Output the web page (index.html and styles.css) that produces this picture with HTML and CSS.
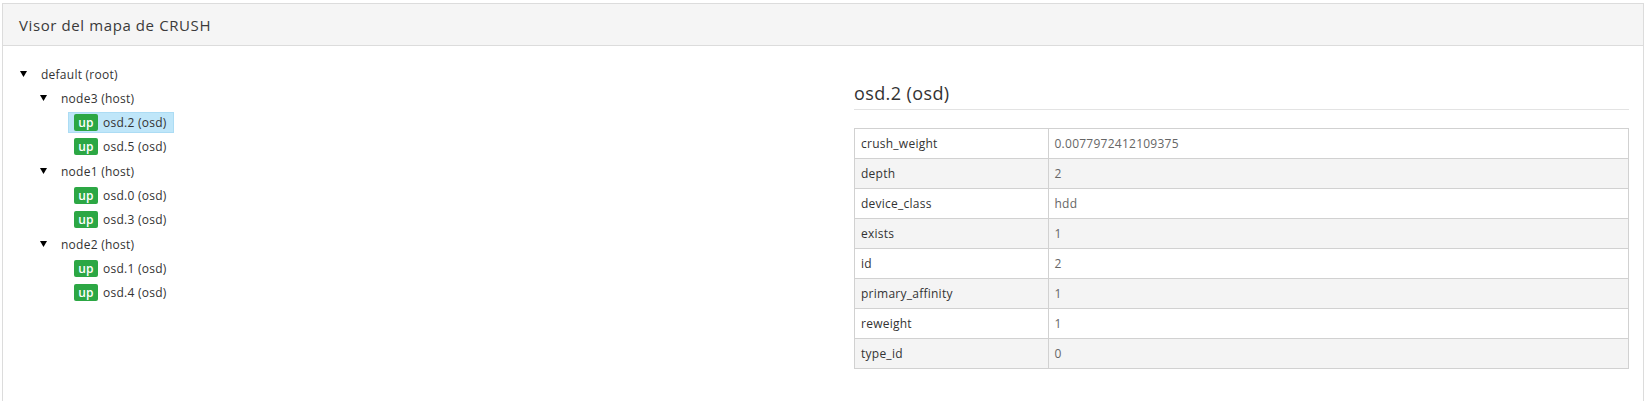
FILE: index.html
```html
<!DOCTYPE html>
<html lang="es">
<head>
<meta charset="utf-8">
<title>Visor del mapa de CRUSH</title>
<link rel="stylesheet" href="styles.css">
</head>
<body>
<div class="card">
  <div class="card-header">Visor del mapa de CRUSH</div>
  <div class="card-body">
    <div class="tree">
      <div class="node">
        <div class="row"><svg class="caret" width="7" height="6" viewBox="0 0 7 6"><polygon points="0,0 7,0 3.5,6" fill="#000"/></svg><span class="label">default (root)</span></div>
        <div class="children">
          <div class="node">
            <div class="row"><svg class="caret" width="7" height="6" viewBox="0 0 7 6"><polygon points="0,0 7,0 3.5,6" fill="#000"/></svg><span class="label">node3 (host)</span></div>
            <div class="leaves">
              <div class="leaf"><span class="leaf-box active"><span class="badge">up</span><span class="label">osd.2 (osd)</span></span></div>
              <div class="leaf"><span class="leaf-box"><span class="badge">up</span><span class="label">osd.5 (osd)</span></span></div>
            </div>
          </div>
          <div class="node">
            <div class="row"><svg class="caret" width="7" height="6" viewBox="0 0 7 6"><polygon points="0,0 7,0 3.5,6" fill="#000"/></svg><span class="label">node1 (host)</span></div>
            <div class="leaves">
              <div class="leaf"><span class="leaf-box"><span class="badge">up</span><span class="label">osd.0 (osd)</span></span></div>
              <div class="leaf"><span class="leaf-box"><span class="badge">up</span><span class="label">osd.3 (osd)</span></span></div>
            </div>
          </div>
          <div class="node">
            <div class="row"><svg class="caret" width="7" height="6" viewBox="0 0 7 6"><polygon points="0,0 7,0 3.5,6" fill="#000"/></svg><span class="label">node2 (host)</span></div>
            <div class="leaves">
              <div class="leaf"><span class="leaf-box"><span class="badge">up</span><span class="label">osd.1 (osd)</span></span></div>
              <div class="leaf"><span class="leaf-box"><span class="badge">up</span><span class="label">osd.4 (osd)</span></span></div>
            </div>
          </div>
        </div>
      </div>
    </div>
    <div class="details">
      <h3 class="details-title">osd.2 (osd)</h3>
      <table class="props">
        <tr><td class="key">crush_weight</td><td class="val">0.0077972412109375</td></tr>
        <tr><td class="key">depth</td><td class="val">2</td></tr>
        <tr><td class="key">device_class</td><td class="val">hdd</td></tr>
        <tr><td class="key">exists</td><td class="val">1</td></tr>
        <tr><td class="key">id</td><td class="val">2</td></tr>
        <tr><td class="key">primary_affinity</td><td class="val">1</td></tr>
        <tr><td class="key">reweight</td><td class="val">1</td></tr>
        <tr><td class="key">type_id</td><td class="val">0</td></tr>
      </table>
    </div>
  </div>
</div>
</body>
</html>
```
FILE: styles.css
```css
html, body {
  margin: 0;
  padding: 0;
  overflow: hidden;
  background: #fff;
}
body {
  font-family: "Open Sans", "Liberation Sans", sans-serif;
  font-size: 12px;
  letter-spacing: 0.25px;
  color: #333;
  padding: 3px 6px 0 2px;
}
.card {
  border: 1px solid #dcdcdc;
  min-height: 420px;
}
.card-header {
  background: #f5f5f5;
  border-bottom: 1px solid #dcdcdc;
  height: 41px;
  display: flex;
  align-items: center;
  padding-left: 16px;
  font-size: 15px;
  letter-spacing: 0.6px;
  color: #3a3a3a;
}
.card-body {
  display: grid;
  grid-template-columns: 1fr 775px;
  padding: 16px 14px 0 17px;
}
.row {
  height: 24px;
  display: flex;
  align-items: center;
}
.caret {
  display: block;
  flex: none;
  margin-right: 14px;
}
.children {
  padding-left: 20px;
}
.children > .node + .node {
  margin-top: 1px;
}
.leaves {
  padding-left: 28px;
}
.leaf {
  height: 24px;
  display: flex;
  align-items: center;
}
.leaf-box {
  display: flex;
  align-items: center;
  height: 21px;
  padding: 0 6px 0 5px;
  box-sizing: border-box;
  border: 1px solid transparent;
}
.leaf-box.active {
  background: #bfe6f9;
  border-color: #acdcf4;
}
.badge {
  background: #2ca744;
  color: #fff;
  font-weight: 600;
  font-size: 12px;
  letter-spacing: 0.3px;
  height: 17px;
  width: 24px;
  border-radius: 2px;
  display: flex;
  align-items: center;
  justify-content: center;
  margin-right: 5px;
}
.details-title {
  margin: 20px 0 0 0;
  font-size: 18px;
  font-weight: 400;
  letter-spacing: 0.4px;
  line-height: 22px;
  color: #333;
  padding-bottom: 5px;
  border-bottom: 1px solid #e3e3e3;
}
.props {
  margin-top: 18px;
  width: 100%;
  border-collapse: collapse;
}
.props td {
  border: 1px solid #d1d1d1;
  height: 30px;
  padding: 0 6px;
  box-sizing: border-box;
}
.props tr:nth-child(even) td {
  background: #f4f4f4;
}
.props .key {
  width: 25%;
  color: #333;
}
.props .val {
  color: #666;
}
```
